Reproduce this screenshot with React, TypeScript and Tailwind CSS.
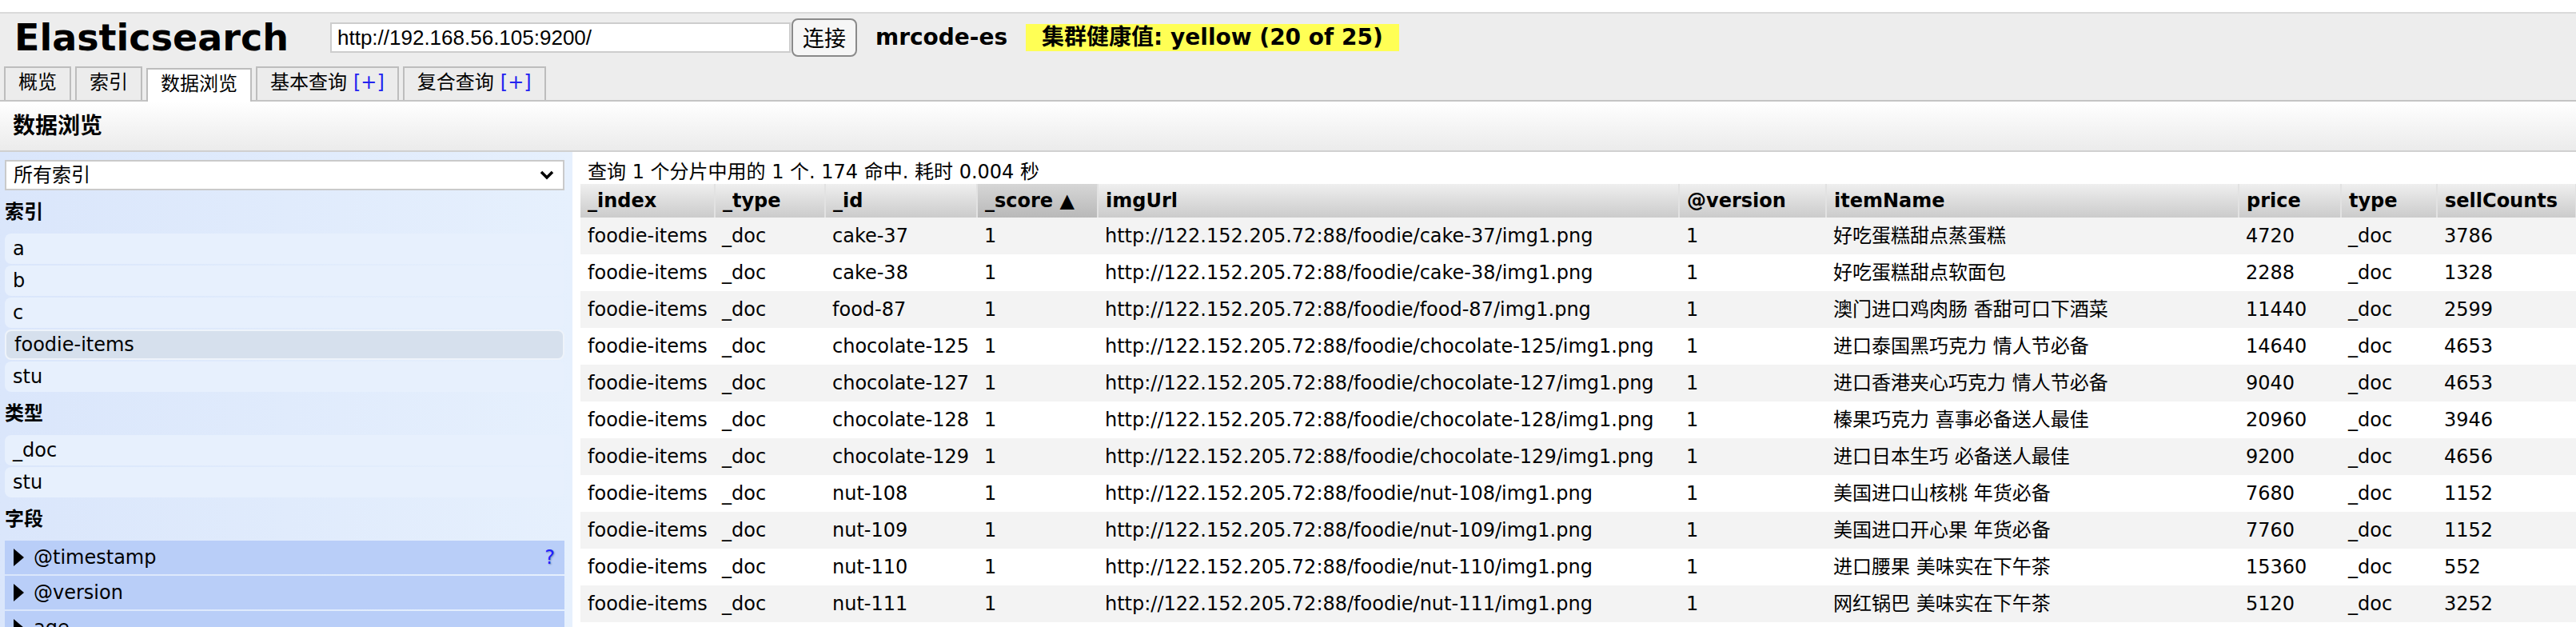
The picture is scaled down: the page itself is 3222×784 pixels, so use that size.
const rows = [
  ["cake-37", "http://122.152.205.72:88/foodie/cake-37/img1.png", "好吃蛋糕甜点蒸蛋糕", "4720", "3786"],
  ["cake-38", "http://122.152.205.72:88/foodie/cake-38/img1.png", "好吃蛋糕甜点软面包", "2288", "1328"],
  ["food-87", "http://122.152.205.72:88/foodie/food-87/img1.png", "澳门进口鸡肉肠 香甜可口下酒菜", "11440", "2599"],
  ["chocolate-125", "http://122.152.205.72:88/foodie/chocolate-125/img1.png", "进口泰国黑巧克力 情人节必备", "14640", "4653"],
  ["chocolate-127", "http://122.152.205.72:88/foodie/chocolate-127/img1.png", "进口香港夹心巧克力 情人节必备", "9040", "4653"],
  ["chocolate-128", "http://122.152.205.72:88/foodie/chocolate-128/img1.png", "榛果巧克力 喜事必备送人最佳", "20960", "3946"],
  ["chocolate-129", "http://122.152.205.72:88/foodie/chocolate-129/img1.png", "进口日本生巧 必备送人最佳", "9200", "4656"],
  ["nut-108", "http://122.152.205.72:88/foodie/nut-108/img1.png", "美国进口山核桃 年货必备", "7680", "1152"],
  ["nut-109", "http://122.152.205.72:88/foodie/nut-109/img1.png", "美国进口开心果 年货必备", "7760", "1152"],
  ["nut-110", "http://122.152.205.72:88/foodie/nut-110/img1.png", "进口腰果 美味实在下午茶", "15360", "552"],
  ["nut-111", "http://122.152.205.72:88/foodie/nut-111/img1.png", "网红锅巴 美味实在下午茶", "5120", "3252"],
];

const headers = ["_index", "_type", "_id", "_score", "imgUrl", "@version", "itemName", "price", "type", "sellCounts"];

function Tab({ label, plus, active }: { label: string; plus?: boolean; active?: boolean }) {
  return (
    <div
      className={
        "h-[42px] -mb-[2px] px-[16px] border-2 border-b-0 border-[#bdbdbd] flex items-end pb-[4px] " +
        (active ? "bg-white" : "bg-[#ececec] h-[40px] mb-0")
      }
    >
      <span>{label}</span>
      {plus && <span className="ml-[8px] text-[#2323f0]">[+]</span>}
    </div>
  );
}

function Item({ label, selected }: { label: string; selected?: boolean }) {
  return (
    <div
      className={
        "h-[38px] rounded-[8px] pl-[10px] flex items-center " +
        (selected ? "bg-[#d6e0ed] border-2 border-[#eef3fa] pl-[8px]" : "bg-[#e7f0fd]")
      }
    >
      {label}
    </div>
  );
}

function Field({ label, help }: { label: string; help?: boolean }) {
  return (
    <div className="h-[42px] bg-[#b9cef8] flex items-center pl-[10px] pr-[12px]">
      <svg width="16" height="24" viewBox="0 0 16 24" className="mr-[10px]">
        <polygon points="1,1 14,12 1,23" fill="#000" />
      </svg>
      <span className="flex-1">{label}</span>
      {help && <span className="text-[#2020ff] [text-shadow:1px_1px_2px_#7a8cb8]">?</span>}
    </div>
  );
}

export default function App() {
  return (
    <div className="h-screen overflow-hidden bg-white text-black text-[24px] font-['DejaVu_Sans','Noto_Sans_CJK_SC',sans-serif]">
      <div className="h-[15px]" />
      <div className="bg-[#ededed] border-t-2 border-[#dadada]">
        <div className="h-[60px] flex items-center pl-[18px]">
          <h1 className="text-[46px] leading-none font-bold tracking-[0px]">Elasticsearch</h1>
          <div className="ml-[52px] w-[576px] h-[38px] bg-white border-2 border-[#cdcdcd] flex items-center pl-[7px] font-['Liberation_Sans','Noto_Sans_CJK_SC',sans-serif] text-[26px]">
            http://192.168.56.105:9200/
          </div>
          <div className="ml-[1px] w-[82px] h-[48px] rounded-[8px] border-2 border-[#8a8a8a] bg-[#f6f6f6] flex items-center justify-center font-['Noto_Sans_CJK_SC',sans-serif] text-[27px]">
            连接
          </div>
          <span className="ml-[23px] font-bold text-[28px]">mrcode-es</span>
          <span className="ml-[23px] h-[34px] px-[20px] bg-[#ffff55] font-bold text-[28px] flex items-center">
            集群健康值: yellow (20 of 25)
          </span>
        </div>
        <div className="mt-[6px] flex items-end gap-[5px] pl-[5px] border-b-2 border-[#c4c4c4]">
          <Tab label="概览" />
          <Tab label="索引" />
          <Tab label="数据浏览" active />
          <Tab label="基本查询" plus />
          <Tab label="复合查询" plus />
        </div>
      </div>
      <div className="h-[63px] bg-gradient-to-b from-white to-[#ebebeb] border-b-2 border-[#d0d0d0] flex items-center pl-[16px]">
        <span className="font-bold text-[28px]">数据浏览</span>
      </div>
      <div className="flex">
        <div className="w-[716px] shrink-0 h-[600px] bg-gradient-to-r from-[#dae6fb] to-[#e6f0fd] pl-[6px] pr-[10px]">
          <div className="mt-[10px] h-[38px] bg-white border-2 border-[#cacaca] flex items-center pl-[9px] pr-[10px]">
            <span className="flex-1">所有索引</span>
            <svg width="20" height="14" viewBox="0 0 20 14">
              <polyline points="3,3 10,10 17,3" fill="none" stroke="#000" strokeWidth="3.5" />
            </svg>
          </div>
          <div className="h-[54px] flex items-center font-bold">索引</div>
          <div className="flex flex-col gap-[2px]">
            <Item label="a" />
            <Item label="b" />
            <Item label="c" />
            <Item label="foodie-items" selected />
            <Item label="stu" />
          </div>
          <div className="h-[54px] flex items-center font-bold">类型</div>
          <div className="flex flex-col gap-[2px]">
            <Item label="_doc" />
            <Item label="stu" />
          </div>
          <div className="h-[54px] flex items-center font-bold">字段</div>
          <div className="flex flex-col gap-[2px]">
            <Field label="@timestamp" help />
            <Field label="@version" />
            <Field label="age" />
            <Field label="desc" />
          </div>
        </div>
        <div className="flex-1 pl-[10px] overflow-hidden">
          <div className="h-[40px] pt-[10px] pl-[9px] leading-[30px]">
            查询 1 个分片中用的 1 个. 174 命中. 耗时 0.004 秒
          </div>
          <table className="table-fixed w-[2496px] border-collapse">
            <colgroup>
              <col className="w-[168px]" />
              <col className="w-[138px]" />
              <col className="w-[190px]" />
              <col className="w-[151px]" />
              <col className="w-[727px]" />
              <col className="w-[184px]" />
              <col className="w-[516px]" />
              <col className="w-[128px]" />
              <col className="w-[120px]" />
              <col className="w-[174px]" />
            </colgroup>
            <thead>
              <tr className="h-[42px]">
                {headers.map((h) => (
                  <th
                    key={h}
                    className={
                      "text-left font-bold pl-[9px] whitespace-nowrap border-r-2 border-[#e2e2e2] bg-gradient-to-b " +
                      (h === "_score" ? "from-[#d6d6d6] to-[#b9b9b9]" : "from-[#efefef] to-[#cbcbcb]")
                    }
                  >
                    {h === "_score" ? "_score ▲" : h}
                  </th>
                ))}
              </tr>
            </thead>
            <tbody>
              {rows.map((r, i) => (
                <tr key={r[0]} className={"h-[46px] " + (i % 2 === 0 ? "bg-[#f3f3f3]" : "bg-white")}>
                  <td className="pl-[9px] whitespace-nowrap">foodie-items</td>
                  <td className="pl-[9px] whitespace-nowrap">_doc</td>
                  <td className="pl-[9px] whitespace-nowrap">{r[0]}</td>
                  <td className="pl-[9px] whitespace-nowrap">1</td>
                  <td className="pl-[9px] whitespace-nowrap">{r[1]}</td>
                  <td className="pl-[9px] whitespace-nowrap">1</td>
                  <td className="pl-[9px] whitespace-nowrap">{r[2]}</td>
                  <td className="pl-[9px] whitespace-nowrap">{r[3]}</td>
                  <td className="pl-[9px] whitespace-nowrap">_doc</td>
                  <td className="pl-[9px] whitespace-nowrap">{r[4]}</td>
                </tr>
              ))}
            </tbody>
          </table>
        </div>
      </div>
    </div>
  );
}
